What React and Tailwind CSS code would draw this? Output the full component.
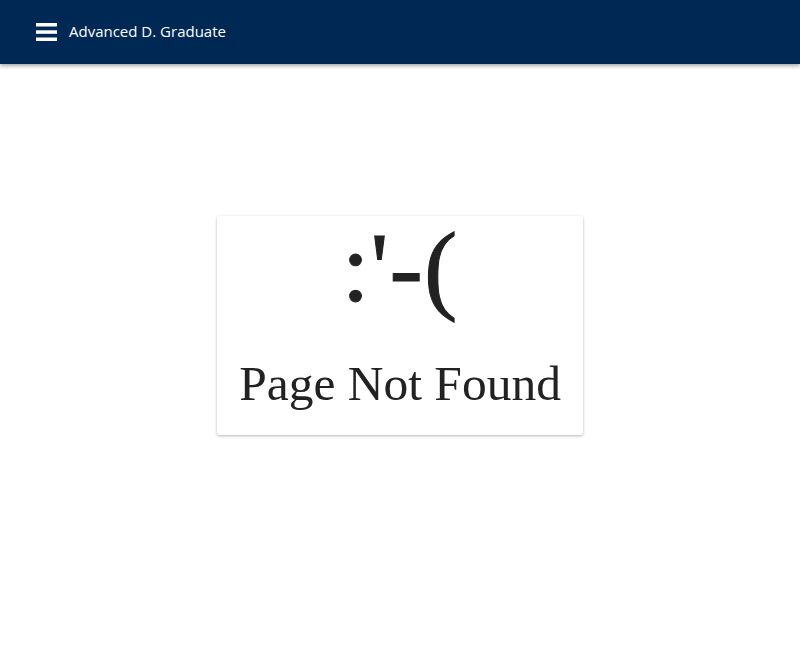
export default function App() {
  return (
    <div className="min-h-screen bg-white">
      <header className="h-16 bg-[#002855] flex items-center px-9 shadow-[0_2px_4px_rgba(0,0,0,0.35)]">
        <svg width="21" height="20" viewBox="0 0 21 20" className="text-white">
          <rect x="0" y="1" width="21" height="3.5" fill="currentColor" />
          <rect x="0" y="8.3" width="21" height="3.5" fill="currentColor" />
          <rect x="0" y="15.5" width="21" height="3.5" fill="currentColor" />
        </svg>
        <span className="ml-3 -mt-px text-white text-[15px] font-['Open_Sans',sans-serif]">Advanced D. Graduate</span>
      </header>
      <main className="flex justify-center pt-[152px]">
        <div className="w-[366px] h-[219px] bg-white rounded-[3px] shadow-[0_1px_3px_rgba(0,0,0,0.3)] flex flex-col items-center font-['Liberation_Serif',serif] text-[#222]">
          <div className="text-[100px] leading-none mt-[2px] tracking-[1px] [-webkit-text-stroke:1px_#222]">:'-(</div>
          <div className="text-[49.5px] leading-none mt-[41px]">Page Not Found</div>
        </div>
      </main>
    </div>
  );
}
